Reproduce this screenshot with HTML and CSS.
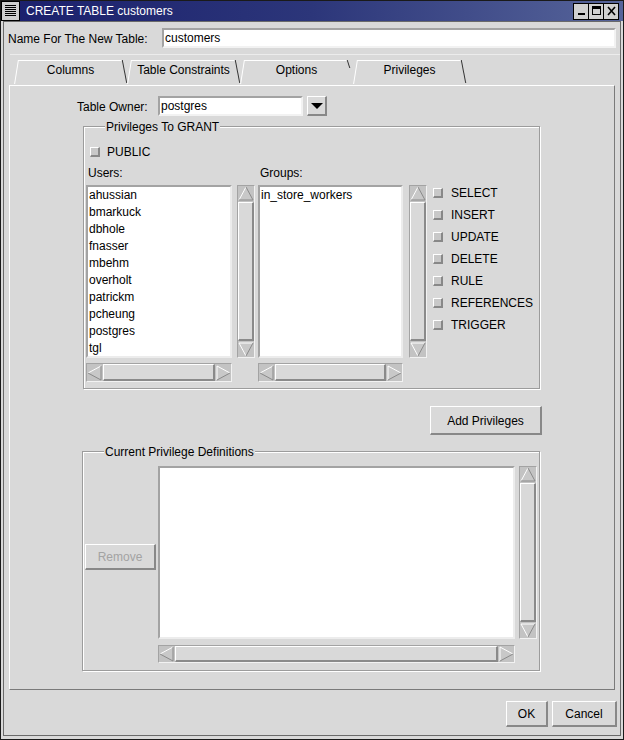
FILE: index.html
```html
<!DOCTYPE html>
<html>
<head>
<meta charset="utf-8">
<link rel="stylesheet" href="styles.css">
</head>
<body>
<div class="window">
  <div class="titlebar">
    <div class="menu-btn"><span class="menu-lines"></span></div>
    <div class="title">CREATE TABLE customers</div>
    <div class="wm-buttons">
      <div class="wm-btn"><svg width="13" height="14" viewBox="0 0 13 14"><rect x="3" y="9" width="7" height="2" fill="#000"/></svg></div>
      <div class="wm-btn"><svg width="13" height="14" viewBox="0 0 13 14"><rect x="2.5" y="2.5" width="8" height="8" fill="none" stroke="#000"/><rect x="2" y="2" width="9" height="3" fill="#000"/></svg></div>
      <div class="wm-btn"><svg width="13" height="14" viewBox="0 0 13 14"><path d="M3 3 L10 11 M10 3 L3 11" stroke="#000" stroke-width="1.6"/></svg></div>
    </div>
  </div>
  <div class="client">
    <div class="name-row">
      <div class="name-label">Name For The New Table:</div>
      <div class="entry name-entry">customers</div>
    </div>
    <div class="tabs">
      <div class="tab">Columns</div>
      <div class="tab">Table Constraints</div>
      <div class="tab tab-short">Options</div>
      <div class="tab">Privileges</div>
    </div>
    <div class="panel">
      <div class="owner-row">
        <div class="owner-label">Table Owner:</div>
        <div class="entry owner-entry">postgres</div>
        <div class="drop-btn"><svg width="14" height="12" viewBox="0 0 14 12"><polygon points="1,3 13,3 7,9" fill="#000"/></svg></div>
      </div>

      <div class="group grant">
        <div class="group-label">Privileges To GRANT</div>
        <div class="check-row public-row"><span class="check"></span><span>PUBLIC</span></div>
        <div class="grant-cols">
          <div class="col col-users">
            <div class="col-label">Users:</div>
            <div class="list-wrap">
              <div class="listbox users-list">
                <div>ahussian</div><div>bmarkuck</div><div>dbhole</div><div>fnasser</div><div>mbehm</div>
                <div>overholt</div><div>patrickm</div><div>pcheung</div><div>postgres</div><div>tgl</div>
              </div>
              <div class="vscroll">
                <svg class="arr" width="16" height="15" viewBox="0 0 16 15"><polygon points="8,1 15,14 1,14" fill="#c8c8c8"/><path d="M1 14 L8 1" stroke="#fff"/><path d="M8 1 L15 14 L1 14" fill="none" stroke="#8a8a8a"/></svg>
                <div class="slider"></div>
                <svg class="arr" width="16" height="15" viewBox="0 0 16 15"><polygon points="1,1 15,1 8,14" fill="#c8c8c8"/><path d="M8 14 L1 1 L15 1" fill="none" stroke="#fff"/><path d="M15 1 L8 14" stroke="#8a8a8a"/></svg>
              </div>
            </div>
            <div class="hscroll users-h">
              <svg class="arr" width="15" height="16" viewBox="0 0 15 16"><polygon points="1,8 14,1 14,15" fill="#c8c8c8"/><path d="M1 8 L14 1" stroke="#fff"/><path d="M14 1 L14 15 L1 8" fill="none" stroke="#8a8a8a"/></svg>
              <div class="slider"></div>
              <svg class="arr" width="15" height="16" viewBox="0 0 15 16"><polygon points="1,1 14,8 1,15" fill="#c8c8c8"/><path d="M1 15 L1 1 L14 8" fill="none" stroke="#fff"/><path d="M14 8 L1 15" stroke="#8a8a8a"/></svg>
            </div>
          </div>
          <div class="col col-groups">
            <div class="col-label">Groups:</div>
            <div class="list-wrap">
              <div class="listbox groups-list">
                <div>in_store_workers</div>
              </div>
              <div class="vscroll groups-v">
                <svg class="arr" width="16" height="15" viewBox="0 0 16 15"><polygon points="8,1 15,14 1,14" fill="#c8c8c8"/><path d="M1 14 L8 1" stroke="#fff"/><path d="M8 1 L15 14 L1 14" fill="none" stroke="#8a8a8a"/></svg>
                <div class="slider"></div>
                <svg class="arr" width="16" height="15" viewBox="0 0 16 15"><polygon points="1,1 15,1 8,14" fill="#c8c8c8"/><path d="M8 14 L1 1 L15 1" fill="none" stroke="#fff"/><path d="M15 1 L8 14" stroke="#8a8a8a"/></svg>
              </div>
            </div>
            <div class="hscroll groups-h">
              <svg class="arr" width="15" height="16" viewBox="0 0 15 16"><polygon points="1,8 14,1 14,15" fill="#c8c8c8"/><path d="M1 8 L14 1" stroke="#fff"/><path d="M14 1 L14 15 L1 8" fill="none" stroke="#8a8a8a"/></svg>
              <div class="slider"></div>
              <svg class="arr" width="15" height="16" viewBox="0 0 15 16"><polygon points="1,1 14,8 1,15" fill="#c8c8c8"/><path d="M1 15 L1 1 L14 8" fill="none" stroke="#fff"/><path d="M14 8 L1 15" stroke="#8a8a8a"/></svg>
            </div>
          </div>
          <div class="col col-privs">
            <div class="check-row"><span class="check"></span><span>SELECT</span></div>
            <div class="check-row"><span class="check"></span><span>INSERT</span></div>
            <div class="check-row"><span class="check"></span><span>UPDATE</span></div>
            <div class="check-row"><span class="check"></span><span>DELETE</span></div>
            <div class="check-row"><span class="check"></span><span>RULE</span></div>
            <div class="check-row"><span class="check"></span><span>REFERENCES</span></div>
            <div class="check-row"><span class="check"></span><span>TRIGGER</span></div>
          </div>
        </div>
      </div>

      <div class="add-row"><div class="btn add-btn">Add Privileges</div></div>

      <div class="group current">
        <div class="group-label">Current Privilege Definitions</div>
        <div class="current-body">
          <div class="btn remove-btn">Remove</div>
          <div class="def-area">
            <div class="list-wrap">
              <div class="listbox def-list"></div>
              <div class="vscroll def-v">
                <svg class="arr" width="16" height="15" viewBox="0 0 16 15"><polygon points="8,1 15,14 1,14" fill="#c8c8c8"/><path d="M1 14 L8 1" stroke="#fff"/><path d="M8 1 L15 14 L1 14" fill="none" stroke="#8a8a8a"/></svg>
                <div class="slider"></div>
                <svg class="arr" width="16" height="15" viewBox="0 0 16 15"><polygon points="1,1 15,1 8,14" fill="#c8c8c8"/><path d="M8 14 L1 1 L15 1" fill="none" stroke="#fff"/><path d="M15 1 L8 14" stroke="#8a8a8a"/></svg>
              </div>
            </div>
            <div class="hscroll def-h">
              <svg class="arr" width="15" height="16" viewBox="0 0 15 16"><polygon points="1,8 14,1 14,15" fill="#c8c8c8"/><path d="M1 8 L14 1" stroke="#fff"/><path d="M14 1 L14 15 L1 8" fill="none" stroke="#8a8a8a"/></svg>
              <div class="slider"></div>
              <svg class="arr" width="15" height="16" viewBox="0 0 15 16"><polygon points="1,1 14,8 1,15" fill="#c8c8c8"/><path d="M1 15 L1 1 L14 8" fill="none" stroke="#fff"/><path d="M14 8 L1 15" stroke="#8a8a8a"/></svg>
            </div>
          </div>
        </div>
      </div>
    </div>
    <div class="footer">
      <div class="btn ok-btn">OK</div>
      <div class="btn cancel-btn">Cancel</div>
    </div>
  </div>
</div>
</body>
</html>
```
FILE: styles.css
```css
* { box-sizing: border-box; }
html, body { margin: 0; padding: 0; }
body {
  width: 624px; height: 740px; overflow: hidden;
  font-family: "Liberation Sans", Arial, sans-serif;
  font-size: 12px; color: #000; background: #d9d9d9;
}
.window {
  width: 624px; height: 740px;
  border: 1px solid #1a1a1a;
  background: #d9d9d9;
  display: flex; flex-direction: column;
}
/* title bar */
.titlebar {
  height: 20px; flex: 0 0 20px;
  display: flex; align-items: center;
  background: linear-gradient(to right, #1a1f6c, #2c367a 50%, #56649a);
}
.menu-btn {
  width: 19px; height: 20px;
  border: 1px solid #000;
  background: #d0d0d0;
  padding: 3px 3px;
}
.menu-lines {
  display: block; width: 100%; height: 100%;
  background: repeating-linear-gradient(#000 0 1px, #d0d0d0 1px 2px);
}
.title {
  color: #fff; padding-left: 6px;
  font-size: 12px; line-height: 20px;
}
.wm-buttons { margin-left: auto; display: flex; margin-right: 4px; }
.wm-btn {
  width: 16px; height: 17px;
  border: 1px solid #000;
  background: #d0d0d0;
  margin-left: -1px;
  display: flex; align-items: center; justify-content: center;
}
/* client */
.client {
  flex: 1;
  margin: 0 2px 3px 2px;
  border: 1px solid #6a6a6a;
  padding: 6px 0 0 0;
  display: flex; flex-direction: column;
}
.name-row { display: flex; align-items: center; height: 20px; padding: 0 4px 0 4px; }
.name-label { flex: 0 0 154px; padding-top: 1px; }
.entry {
  background: #fff;
  border-style: solid; border-width: 2px;
  border-color: #a3a3a3 #f2f2f2 #f2f2f2 #a3a3a3;
  height: 20px; line-height: 17px;
  padding-left: 1px;
}
.name-entry { flex: 1; }
/* tabs */
.tabs {
  margin: 6px 0 0 6px;
  height: 31px; flex: 0 0 31px;
  border-top: 1px solid #ececec;
  padding: 5px 0 0 4px;
  display: flex;
}
.tab {
  position: relative;
  width: 113px; height: 25px;
  text-align: center; line-height: 21px;
  background: linear-gradient(#fff, #fff) no-repeat 4px 0 / calc(100% - 9px) 1px;
}
.tab::before {
  content: ""; position: absolute;
  left: 2px; top: 0; width: 1px; height: 24px;
  background: #fff; transform: skewX(-9deg);
}
.tab::after {
  content: ""; position: absolute;
  right: 2px; top: 0; width: 1px; height: 23px;
  background: #333; transform: skewX(11deg);
}
.tab-short::after { height: 8px; transform: skewX(18deg); right: 4px; top: 0; }
/* panel */
.panel {
  margin: 0 5px 0 5px;
  height: 605px; flex: 0 0 605px;
  border: 1px solid;
  border-color: #fff #7a7a7a #7a7a7a #fff;
  display: flex; flex-direction: column;
}
.owner-row {
  margin-top: 10px; height: 20px;
  display: flex; align-items: center;
  padding-left: 67px;
}
.owner-label { flex: 0 0 81px; padding-top: 1px; }
.owner-entry { width: 145px; }
.drop-btn {
  margin-left: 4px; width: 20px; height: 20px;
  border-style: solid; border-width: 1px 2px 2px 1px;
  border-color: #fff #888 #888 #fff;
  display: flex; align-items: center; justify-content: center;
}
/* groups */
.group {
  position: relative;
  border: 1px solid #9c9c9c;
  box-shadow: inset 1px 1px 0 #fff, 1px 1px 0 #fff;
}
.group-label {
  position: absolute; top: -7px; left: 21px;
  padding: 0 1px; background: #d9d9d9;
  line-height: 14px;
}
.grant {
  margin-top: 10px; margin-left: 73px;
  width: 457px; height: 263px;
  padding: 18px 0 0 1px;
}
.check-row { display: flex; align-items: center; height: 22px; }
.check {
  width: 10px; height: 10px; flex: 0 0 10px;
  background: #c8c8c8;
  border-style: solid; border-width: 1px 2px 2px 1px;
  border-color: #fff #888 #888 #fff;
  margin-right: 8px;
}
.public-row { height: 14px; padding-left: 5px; }
.public-row .check { margin-right: 7px; }
.grant-cols { display: flex; margin-top: 5px; }
.col { display: flex; flex-direction: column; }
.col-users { margin-left: 1px; width: 169px; }
.col-groups { margin-left: 3px; width: 169px; }
.col-privs { margin-left: 6px; padding-top: 18px; }
.col-label { height: 16px; line-height: 14px; padding: 2px 0 0 2px; margin-bottom: 5px; }
.list-wrap { display: flex; }
.listbox {
  background: #fff;
  border-style: solid; border-width: 2px;
  border-color: #a3a3a3 #ececec #ececec #a3a3a3;
  height: 173px;
  line-height: 17px;
  padding: 0 0 0 1px;
}
.users-list { width: 146px; }
.groups-list { width: 145px; }
.vscroll {
  margin-left: 5px; width: 18px; height: 173px;
  border: 1px solid; border-color: #a3a3a3 #f2f2f2 #f2f2f2 #a3a3a3;
  background: #c3c3c3;
  display: flex; flex-direction: column;
}
.groups-v { margin-left: 6px; }
.vscroll .slider {
  flex: 1; margin: 1px 0;
  border-style: solid; border-width: 1px 2px 2px 1px;
  border-color: #fff #8a8a8a #8a8a8a #fff;
  background: #d9d9d9;
}
.hscroll {
  margin-top: 5px; height: 19px;
  border: 1px solid; border-color: #a3a3a3 #f2f2f2 #f2f2f2 #a3a3a3;
  background: #c3c3c3;
  display: flex; align-items: center;
}
.hscroll .slider {
  flex: 1; height: 17px; margin: 0 1px;
  border-style: solid; border-width: 1px 2px 2px 1px;
  border-color: #fff #8a8a8a #8a8a8a #fff;
  background: #d9d9d9;
}
.users-h { width: 146px; }
.groups-h { width: 145px; }
.arr { display: block; flex: 0 0 auto; }
/* buttons */
.btn {
  background: #d9d9d9;
  border-style: solid; border-width: 1px 2px 2px 1px;
  border-color: #fff #888 #888 #fff;
  display: flex; align-items: center; justify-content: center;
  padding-top: 1px;
}
.add-row { margin-top: 17px; padding-left: 420px; }
.add-btn { width: 112px; height: 29px; }
.current {
  margin-top: 16px; margin-left: 72px;
  width: 458px; height: 220px;
}
.current-body { display: flex; }
.remove-btn {
  margin-left: 2px; margin-top: 92px;
  width: 71px; height: 26px;
  color: #a3a3a3;
}
.def-area { margin-left: 2px; margin-top: 14px; display: flex; flex-direction: column; }
.def-list { width: 357px; }
.def-v { margin-left: 4px; }
.def-h { width: 357px; margin-top: 6px; height: 18px; }
.def-h .slider { height: 16px; }
.footer {
  margin-top: 11px;
  display: flex; justify-content: flex-end; gap: 4px;
  padding-right: 3px;
}
.ok-btn { width: 42px; height: 26px; }
.cancel-btn { width: 65px; height: 26px; }
```
